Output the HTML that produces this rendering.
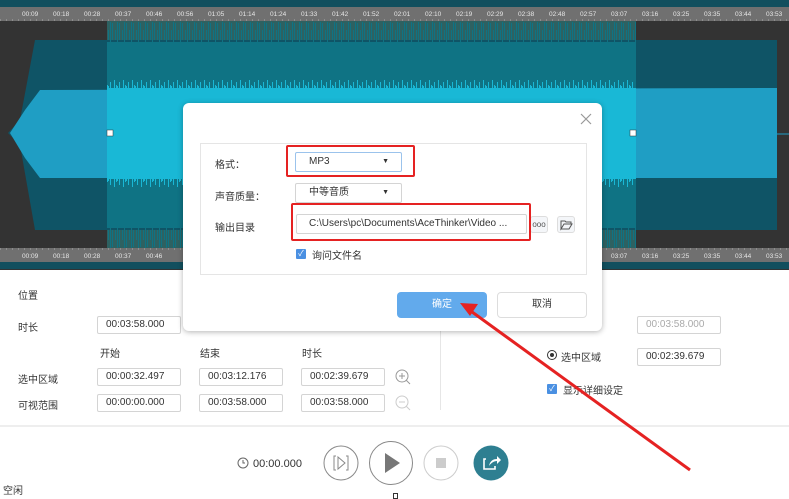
<!DOCTYPE html>
<html><head><meta charset="utf-8"><style>
*{margin:0;padding:0;box-sizing:border-box}
body{width:789px;height:499px;overflow:hidden;background:#fff;font-family:"Liberation Sans","Noto Sans CJK SC",sans-serif;font-size:10px;color:#333;position:relative}
.a{position:absolute}
.in{position:absolute;height:18px;border:1px solid #d4d4d4;border-radius:2px;background:#fff;font-size:10px;line-height:16px;padding-left:8px;color:#333;width:84px}
.lb{position:absolute;font-size:10px;color:#333}
</style></head><body>
<svg class="a" style="left:0;top:0" width="789" height="270">
<defs>
<pattern id="sp" width="9" height="20" patternUnits="userSpaceOnUse">
<rect x="0" y="6" width="1" height="14" fill="#19b8d6"/><rect x="2" y="2" width="1" height="18" fill="#19b8d6"/><rect x="4" y="9" width="1" height="11" fill="#19b8d6"/><rect x="6" y="0" width="1" height="20" fill="#19b8d6"/><rect x="8" y="5" width="1" height="15" fill="#19b8d6"/>
</pattern>
<pattern id="sp2" width="7" height="20" patternUnits="userSpaceOnUse">
<rect x="0" y="3" width="1" height="17" fill="#0f7384"/><rect x="3" y="10" width="1" height="10" fill="#0f7384"/><rect x="5" y="0" width="1" height="20" fill="#0f7384"/>
</pattern>
</defs>
<rect width="789" height="270" fill="#333"/>
<rect y="0" width="789" height="7" fill="#124f5e"/>
<rect y="7" width="789" height="14" fill="#707070"/>
<rect y="248" width="789" height="14" fill="#707070"/>
<rect y="262" width="789" height="7" fill="#124f5e"/>
<rect x="107" y="21" width="529" height="227" fill="#2e6161"/>
<polygon points="8,133 20,120 35,40 777,40 777,230 35,230 20,145" fill="#0f5466"/>
<polygon points="107,42 636,42 636,228 107,228" fill="#0f7384"/>
<rect x="107" y="22" width="529" height="20" fill="url(#sp2)"/>
<g transform="translate(0,270) scale(1,-1)"><rect x="107" y="22" width="529" height="20" fill="url(#sp2)"/></g>
<polygon points="10,133 25,110 40,90 777,88 777,178 40,178 25,158" fill="#1f9ec4"/>
<rect x="107" y="88" width="529" height="91" fill="#19b8d6"/>
<rect x="107" y="80" width="529" height="10" fill="url(#sp)"/>
<g transform="translate(0,267) scale(1,-1)"><rect x="107" y="80" width="529" height="10" fill="url(#sp)"/></g>
<line x1="777" y1="134" x2="789" y2="134" stroke="#1f9ec4"/>
<rect x="107" y="130" width="6" height="6" fill="#fff" stroke="#333" stroke-width=".5"/>
<rect x="630" y="130" width="6" height="6" fill="#fff" stroke="#333" stroke-width=".5"/>
<g fill="#e6e6e6" font-size="6.5" font-family="Liberation Sans">
<text x="22" y="16">00:09</text><text x="53" y="16">00:18</text><text x="84" y="16">00:28</text><text x="115" y="16">00:37</text><text x="146" y="16">00:46</text><text x="177" y="16">00:56</text><text x="208" y="16">01:05</text><text x="239" y="16">01:14</text><text x="270" y="16">01:24</text><text x="301" y="16">01:33</text><text x="332" y="16">01:42</text><text x="363" y="16">01:52</text><text x="394" y="16">02:01</text><text x="425" y="16">02:10</text><text x="456" y="16">02:19</text><text x="487" y="16">02:29</text><text x="518" y="16">02:38</text><text x="549" y="16">02:48</text><text x="580" y="16">02:57</text><text x="611" y="16">03:07</text><text x="642" y="16">03:16</text><text x="673" y="16">03:25</text><text x="704" y="16">03:35</text><text x="735" y="16">03:44</text><text x="766" y="16">03:53</text>
<text x="22" y="258">00:09</text><text x="53" y="258">00:18</text><text x="84" y="258">00:28</text><text x="115" y="258">00:37</text><text x="146" y="258">00:46</text><text x="611" y="258">03:07</text><text x="642" y="258">03:16</text><text x="673" y="258">03:25</text><text x="704" y="258">03:35</text><text x="735" y="258">03:44</text><text x="766" y="258">03:53</text>
</g>
<line x1="0" y1="20" x2="789" y2="20" stroke="#aaa" stroke-dasharray="1 5"/>
<line x1="0" y1="249" x2="789" y2="249" stroke="#aaa" stroke-dasharray="1 5"/>
</svg>

<div class="lb" style="left:18px;top:287px">位置</div>
<div class="lb" style="left:18px;top:319px">时长</div>
<div class="in" style="left:97px;top:316px">00:03:58.000</div>
<div class="lb" style="left:100px;top:345px">开始</div>
<div class="lb" style="left:200px;top:345px">结束</div>
<div class="lb" style="left:302px;top:345px">时长</div>
<div class="lb" style="left:18px;top:371px">选中区域</div>
<div class="lb" style="left:18px;top:397px">可视范围</div>
<div class="in" style="left:97px;top:368px">00:00:32.497</div>
<div class="in" style="left:199px;top:368px">00:03:12.176</div>
<div class="in" style="left:301px;top:368px">00:02:39.679</div>
<div class="in" style="left:97px;top:394px">00:00:00.000</div>
<div class="in" style="left:199px;top:394px">00:03:58.000</div>
<div class="in" style="left:301px;top:394px">00:03:58.000</div>
<svg class="a" style="left:393px;top:367px" width="20" height="46"><circle cx="9" cy="9" r="6" fill="none" stroke="#999"/><path d="M6 9h6M9 6v6M13 13l4 4" stroke="#999"/><circle cx="9" cy="35" r="6" fill="none" stroke="#ccc"/><path d="M6 35h6M13 39l4 4" stroke="#ccc"/></svg>
<div class="a" style="left:440px;top:295px;width:1px;height:115px;background:#e6e6e6"></div>
<div class="in" style="left:637px;top:316px;color:#aaa">00:03:58.000</div>
<div class="a" style="left:547px;top:350px;width:10px;height:10px;border:1px solid #333;border-radius:50%"><div style="margin:2px;width:4px;height:4px;background:#333;border-radius:50%"></div></div>
<div class="lb" style="left:561px;top:349px">选中区域</div>
<div class="in" style="left:637px;top:348px">00:02:39.679</div>
<div class="a" style="left:547px;top:384px;width:10px;height:10px;background:#4a90e2;border-radius:1px;color:#fff;font-size:8px;line-height:10px;text-align:center">✓</div>
<div class="lb" style="left:563px;top:382px">显示详细设定</div>
<div class="a" style="left:0;top:425px;width:789px;height:2px;background:#eee"></div>
<svg class="a" style="left:230px;top:440px" width="290" height="46">
<circle cx="13" cy="23" r="5" fill="none" stroke="#666"/><path d="M13 20v3h2" stroke="#666" fill="none"/>
<text x="23" y="27" font-size="11" fill="#333" font-family="Liberation Sans">00:00.000</text>
<circle cx="111" cy="23" r="17" fill="none" stroke="#888"/><path d="M106 16h-2v14h2M116 16h2v14h-2M108 17l7 6-7 6z" fill="none" stroke="#888"/>
<circle cx="161" cy="23" r="21.5" fill="none" stroke="#888"/><path d="M155 13l15 10-15 10z" fill="#777"/>
<circle cx="211" cy="23" r="17" fill="none" stroke="#ccc"/><rect x="206" y="18" width="10" height="10" fill="#ccc"/>
<circle cx="261" cy="23" r="17.5" fill="#2e7f91"/><path d="M256 19h-2v10h11v-3" fill="none" stroke="#fff" stroke-width="1.6"/><path d="M259 26c1-5 4-7 8-7v-3l4 4-4 4v-3c-3 0-6 2-8 5z" fill="#fff"/>
</svg>
<div class="lb" style="left:3px;top:482px">空闲</div>
<div class="a" style="left:393px;top:493px;width:5px;height:6px;border:1px solid #333"></div>

<div class="a" style="left:183px;top:103px;width:419px;height:228px;background:#fff;border-radius:6px;box-shadow:0 1px 6px rgba(0,0,0,.3)">
<svg class="a" style="left:396px;top:9px" width="14" height="14"><path d="M2 2l10 10M12 2L2 12" stroke="#999" stroke-width="1.2"/></svg>
<div class="a" style="left:17px;top:40px;width:387px;height:132px;border:1px solid #e5e5e5"></div>
<div class="lb" style="left:32px;top:53px">格式：</div>
<div class="lb" style="left:32px;top:85px">声音质量：</div>
<div class="lb" style="left:32px;top:116px">输出目录</div>
<div class="in" style="left:112px;top:49px;width:107px;height:20px;border-color:#9bc3ec;line-height:18px;padding-left:13px">MP3<span style="position:absolute;right:12px;font-size:7px">▼</span></div>
<div class="in" style="left:112px;top:80px;width:107px;height:20px;line-height:18px;padding-left:13px">中等音质<span style="position:absolute;right:12px;font-size:7px">▼</span></div>
<div class="in" style="left:113px;top:111px;width:231px;height:20px;line-height:18px;padding-left:12px">C:\Users\pc\Documents\AceThinker\Video ...</div>
<div class="a" style="left:347px;top:113px;width:18px;height:17px;border:1px solid #ddd;border-radius:3px;background:#f4f6f9;font-size:8px;line-height:15px;text-align:center;color:#555">ooo</div>
<div class="a" style="left:374px;top:113px;width:18px;height:17px;border:1px solid #ddd;border-radius:3px;background:#f4f6f9"><svg width="16" height="15"><path d="M3 4h4l1 1h5v2H6l-3 5zM3 12l3-5h8l-3 5z" fill="none" stroke="#555"/></svg></div>
<div class="a" style="left:113px;top:146px;width:10px;height:10px;background:#4a90e2;border-radius:1px;color:#fff;font-size:8px;line-height:10px;text-align:center">✓</div>
<div class="lb" style="left:129px;top:144px">询问文件名</div>
<div class="a" style="left:103px;top:42px;width:129px;height:32px;border:2px solid #e52222;border-radius:2px"></div>
<div class="a" style="left:108px;top:100px;width:240px;height:38px;border:2px solid #e52222;border-radius:2px"></div>
<div class="a" style="left:214px;top:189px;width:90px;height:26px;background:#62aaec;border-radius:4px;color:#fff;text-align:center;line-height:26px">确定</div>
<div class="a" style="left:314px;top:189px;width:90px;height:26px;border:1px solid #ddd;border-radius:4px;text-align:center;line-height:24px">取消</div>
</div>
<svg class="a" style="left:0;top:0" width="789" height="499"><path d="M690 470L468 309" stroke="#e52222" stroke-width="3"/><path d="M460 303l18 1-8 12z" fill="#e52222"/></svg>
</body></html>
